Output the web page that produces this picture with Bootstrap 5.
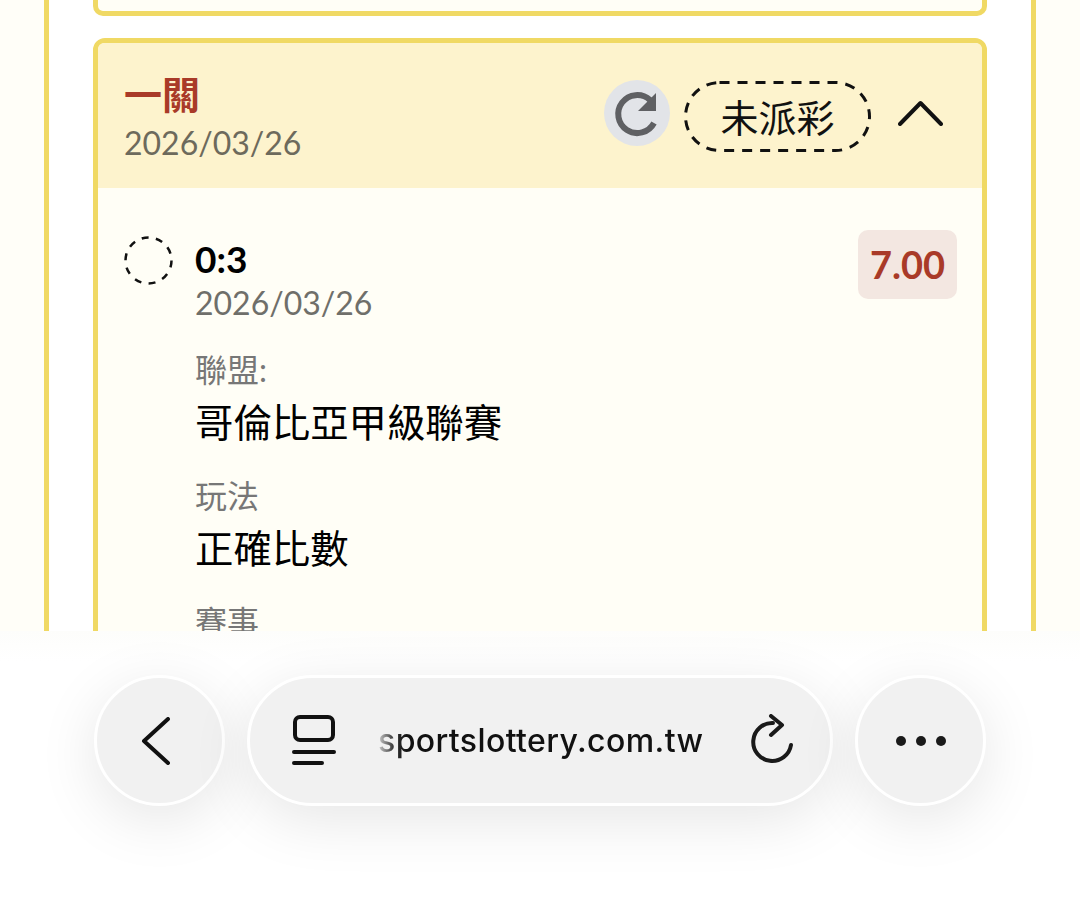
<!DOCTYPE html>
<html lang="zh-Hant">
<head>
    <meta charset="UTF-8">
    <meta name="viewport" content="width=device-width, initial-scale=1.0">
    <title>一關</title>
    <link href="https://cdn.jsdelivr.net/npm/bootstrap@5.3.0/dist/css/bootstrap.min.css" rel="stylesheet">
    <style>
        html, body { height: 900px; overflow: hidden; }
        body { background: #fffef8; font-family: "Lato", "Noto Sans CJK TC", sans-serif; color: #000; }
        .page-clip { height: 631px; overflow: hidden; padding: 0 44px; }
        .outer-panel { background: #fff; border-left: 5px solid #f0d964; border-right: 5px solid #f0d964; padding: 0 44px; height: 900px; }
        .prev-ticket { height: 16px; background: #fffef6; border: 5px solid #f0d964; border-top: 0; border-radius: 0 0 10px 10px; margin-bottom: 22px; }
        .ticket { background: #fffef6; border: 5px solid #f0d964; border-radius: 12px; --bs-card-inner-border-radius: 6px; }
        .ticket .card-header { background: #fdf3cd; border: 0; height: 145px; padding: 0 39px 0 26px; }
        .ticket .card-body { padding: 48px 25px 0 26px; }
        .head-left { margin-top: 4px; }
        .ticket-title { font-size: 38px; line-height: 44px; font-weight: 700; color: #a93a28; }
        .ticket-date { font-size: 32px; line-height: 40px; color: #6d6a5c; margin-top: 7px; }
        .head-right { margin-top: -5px; }
        .reload-round { width: 66px; height: 66px; background: #e2e4e8; }
        .status-pill { width: 187px; height: 71px; font-size: 38px; line-height: 1; color: #111; margin: 7px 27px 0 14px; }
        .status-pill svg, .pick-mark svg { position: absolute; left: 0; top: 0; }
        .pick-mark { width: 49px; height: 49px; margin-right: 23px; flex-shrink: 0; }
        .pick-score { font-size: 37px; line-height: 40px; font-weight: 700; margin-top: 3px; }
        .pick-date { font-size: 32px; line-height: 46px; color: #6f6f6a; margin-top: 1px; }
        .odds-tag { width: 99px; height: 69px; background: #f3e7e1; color: #a93a28; font-size: 38px; font-weight: 700; border-radius: 10px; margin-top: -6px; }
        .text-col { margin-left: -1px; }
        .info-label { font-size: 32px; line-height: 46px; color: #777; }
        .info-value { font-size: 38.4px; line-height: 58px; margin-bottom: 22px; }
        .info-first { margin-top: 21px; }
        .browser-bar { position: absolute; left: 0; right: 0; top: 631px; height: 269px; background: linear-gradient(#fdfdfb, #fff 30px); padding: 44px 94px 0; gap: 22px; }
        .bar-btn { width: 131px; height: 131px; background: #f1f1f1; border: 3px solid #fff; box-shadow: 0 14px 60px rgba(0,0,0,.1); flex-shrink: 0; }
        .url-pill { width: 586px; height: 131px; background: #f1f1f1; border: 3px solid #fff; box-shadow: 0 14px 60px rgba(0,0,0,.1); padding: 0 36px 0 42px; }
        .url-text { font-family: "Inter", "Liberation Sans", sans-serif; font-size: 32px; font-weight: 500; letter-spacing: .4px; margin-left: 42px; margin-right: 46px; background: linear-gradient(90deg, #ccc 0, #333 16px, #111 30px); -webkit-background-clip: text; background-clip: text; color: transparent; white-space: nowrap; }
    </style>
</head>
<body>
<div class="page-clip">
    <div class="outer-panel">
        <div class="prev-ticket"></div>
        <div class="card ticket">
            <div class="card-header d-flex align-items-center justify-content-between">
                <div class="head-left">
                    <div class="ticket-title">一關</div>
                    <div class="ticket-date">2026/03/26</div>
                </div>
                <div class="head-right d-flex align-items-center">
                    <div class="reload-round rounded-circle">
                        <svg width="66" height="66" viewBox="0 0 66 66" fill="none">
                            <path d="M46 20 A19 19 0 1 0 50 43" stroke="#5f6063" stroke-width="6"/>
                            <path d="M52 13 V31 H34 Z" fill="#5f6063"/>
                        </svg>
                    </div>
                    <div class="status-pill position-relative d-flex align-items-center justify-content-center">
                        <svg width="187" height="71" viewBox="0 0 187 71" fill="none">
                            <rect x="1.5" y="1.5" width="184" height="68" rx="34" stroke="#111" stroke-width="3" stroke-dasharray="10 8"/>
                        </svg>
                        未派彩
                    </div>
                    <svg width="45" height="26" viewBox="0 0 45 26" fill="none">
                        <path d="M2 24 L22.5 3 L43 24" stroke="#111" stroke-width="4" stroke-linecap="round" stroke-linejoin="round"/>
                    </svg>
                </div>
            </div>
            <div class="card-body">
                <div class="d-flex align-items-start">
                    <div class="pick-mark position-relative">
                        <svg width="49" height="49" viewBox="0 0 49 49" fill="none">
                            <circle cx="24.5" cy="24.5" r="23" stroke="#111" stroke-width="2.5" stroke-dasharray="7 7.4"/>
                        </svg>
                    </div>
                    <div class="flex-grow-1 text-col">
                        <div class="d-flex justify-content-between align-items-start">
                            <div>
                                <div class="pick-score">0:3</div>
                                <div class="pick-date">2026/03/26</div>
                            </div>
                            <div class="odds-tag d-flex align-items-center justify-content-center">7.00</div>
                        </div>
                        <div class="info-label info-first">聯盟:</div>
                        <div class="info-value">哥倫比亞甲級聯賽</div>
                        <div class="info-label">玩法</div>
                        <div class="info-value">正確比數</div>
                        <div class="info-label">賽事</div>
                        <div class="info-value">&nbsp;</div>
                    </div>
                </div>
            </div>
        </div>
    </div>
</div>

<div class="browser-bar d-flex align-items-start">
    <div class="bar-btn rounded-circle d-flex align-items-center justify-content-center">
        <svg width="30" height="48" viewBox="0 0 30 48" fill="none" style="margin-left:-8px">
            <path d="M27 2 L3 24 L27 46" stroke="#111" stroke-width="4" stroke-linecap="round" stroke-linejoin="round"/>
        </svg>
    </div>
    <div class="url-pill rounded-pill d-flex align-items-center">
        <svg width="44" height="52" viewBox="0 0 44 52" fill="none" class="flex-shrink-0">
            <rect x="3" y="2" width="38" height="23" rx="5" stroke="#111" stroke-width="4"/>
            <path d="M2 37 H42 M2 48 H30" stroke="#111" stroke-width="4" stroke-linecap="round"/>
        </svg>
        <span class="url-text">sportslottery.com.tw</span>
        <svg width="46" height="54" viewBox="0 0 46 54" fill="none" class="flex-shrink-0">
            <path d="M24 9 A19 19 0 1 0 42 31" stroke="#1a1a1a" stroke-width="4" stroke-linecap="round"/>
            <path d="M22 2 L33 11 L22 21" stroke="#1a1a1a" stroke-width="4" stroke-linecap="round" stroke-linejoin="round"/>
        </svg>
    </div>
    <div class="bar-btn rounded-circle d-flex align-items-center justify-content-center">
        <svg width="52" height="12" viewBox="0 0 52 12" fill="#1a1a1a">
            <circle cx="6" cy="6" r="5"/><circle cx="26" cy="6" r="5"/><circle cx="46" cy="6" r="5"/>
        </svg>
    </div>
</div>

<script src="https://cdn.jsdelivr.net/npm/bootstrap@5.3.0/dist/js/bootstrap.bundle.min.js"></script>
</body>
</html>
